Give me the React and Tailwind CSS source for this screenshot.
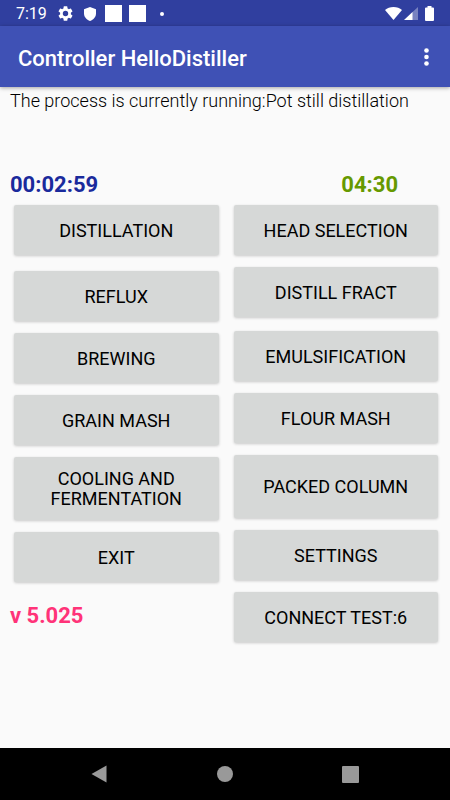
import React from "react";

const leftButtons = [
  { label: "Distillation", style: "h-[50px] mb-4" },
  { label: "Reflux", style: "h-[50px] mb-3" },
  { label: "Brewing", style: "h-[50px] mb-3" },
  { label: "Grain mash", style: "h-[50px] mb-3" },
  { label: "Cooling and fermentation", style: "h-[63px] mb-3" },
  { label: "Exit", style: "h-[50px]" },
];

const rightButtons = [
  { label: "Head selection", style: "h-[50px] mb-3" },
  { label: "Distill fract", style: "h-[50px] mb-3.5" },
  { label: "Emulsification", style: "h-[50px] mb-3" },
  { label: "Flour mash", style: "h-[50px] mb-3" },
  { label: "Packed column", style: "h-[63px] mb-3" },
  { label: "Settings", style: "h-[50px] mb-3" },
  { label: "Connect test:6", style: "h-[50px]" },
];

const MenuButton = ({ label, style }) => (
  <button
    className={`w-full shrink-0 px-6 pt-px rounded-xs bg-[#d6d8d7] text-lg leading-5 font-normal uppercase text-black shadow-[0_1px_3px_rgba(0,0,0,0.2)] ${style}`}
  >
    {label}
  </button>
);

const StatusBar = () => (
  <div className="h-[26px] flex items-center justify-between bg-[#303f9f] px-4 pt-px text-white">
    <div className="flex items-center">
      <span className="w-[42px] pt-px text-base leading-5">7:19</span>
      <svg className="w-[15px] h-[15px]" viewBox="2 2 20 20" fill="currentColor">
        <path d="M19.14 12.94c.04-.3.06-.61.06-.94s-.02-.64-.07-.94l2.03-1.58a.49.49 0 0 0 .12-.61l-1.92-3.32a.49.49 0 0 0-.59-.22l-2.39.96a7 7 0 0 0-1.62-.94l-.36-2.54a.48.48 0 0 0-.48-.41h-3.84a.48.48 0 0 0-.47.41l-.36 2.54c-.59.24-1.13.57-1.62.94l-2.39-.96a.48.48 0 0 0-.59.22L2.74 8.87a.47.47 0 0 0 .12.61l2.03 1.58a6.6 6.6 0 0 0 0 1.88l-2.03 1.58a.49.49 0 0 0-.12.61l1.92 3.32c.12.22.37.29.59.22l2.39-.96c.5.38 1.03.7 1.62.94l.36 2.54c.05.24.24.41.48.41h3.84c.24 0 .44-.17.47-.41l.36-2.54c.59-.24 1.13-.56 1.62-.94l2.39.96c.22.08.47 0 .59-.22l1.92-3.32a.47.47 0 0 0-.12-.61zM12 15.6a3.6 3.6 0 1 1 0-7.2 3.6 3.6 0 0 1 0 7.2z" />
      </svg>
      <svg className="w-3 h-[14px] ml-[11px]" viewBox="0 0 12 14" fill="currentColor">
        <path d="M6 0 12 2.3v4.3c0 3.3-2.5 6.4-6 7.4C2.5 13 0 9.9 0 6.6V2.3z" />
      </svg>
      <span className="w-[17px] h-[17px] ml-[9px] bg-white" />
      <span className="w-[17px] h-[17px] ml-[7px] bg-white" />
      <span className="w-1 h-1 ml-3.5 rounded-full bg-white" />
    </div>
    <div className="flex items-center">
      <svg className="w-[17px] h-[13px]" viewBox="0 0 17 13" fill="currentColor">
        <path d="M8.5 13 0 3C2.2 1.1 5.2 0 8.5 0s6.3 1.1 8.5 3z" />
      </svg>
      <svg className="w-[14px] h-[13px] ml-0.5" viewBox="0 0 14 13" fill="currentColor">
        <path d="M14 0v13H8V5.6z" opacity="0.35" />
        <path d="M8.5 5v8H0z" />
      </svg>
      <svg className="w-[9px] h-[15px] ml-[7px]" viewBox="0 0 9 15" fill="currentColor">
        <path d="M2.5 0h4v1.5H8a1 1 0 0 1 1 1V14a1 1 0 0 1-1 1H1a1 1 0 0 1-1-1V2.5a1 1 0 0 1 1-1h1.5z" />
      </svg>
    </div>
  </div>
);

const AppBar = () => (
  <header className="h-[61px] flex items-center justify-between bg-[#3f51b5] pl-[18px] pr-4 text-white shadow-[0_1px_4px_rgba(0,0,0,0.35)]">
    <h1 className="pt-1 text-[22px] leading-7 font-medium">Controller HelloDistiller</h1>
    <button aria-label="More options" className="w-4 h-10 flex items-center justify-center">
      <svg className="w-[5px] h-[18px]" viewBox="0 0 5 18" fill="currentColor">
        <circle cx="2.5" cy="2.5" r="2.3" />
        <circle cx="2.5" cy="9" r="2.3" />
        <circle cx="2.5" cy="15.5" r="2.3" />
      </svg>
    </button>
  </header>
);

const NavBar = () => (
  <nav className="h-[52px] flex items-center justify-between bg-black px-[91px] text-[#999999]">
    <button aria-label="Back">
      <svg className="w-4 h-[18px]" viewBox="0 0 16 18" fill="currentColor">
        <path d="M15.5.5v17L.5 9z" />
      </svg>
    </button>
    <button aria-label="Home">
      <span className="block w-4 h-4 rounded-full bg-[#999999]" />
    </button>
    <button aria-label="Recent apps">
      <span className="block w-[17px] h-[17px] rounded-[1px] bg-[#999999]" />
    </button>
  </nav>
);

const App = () => {
  return (
    <div className="min-h-screen flex flex-col bg-[#fafafa] font-['Roboto',sans-serif]">
      <StatusBar />
      <AppBar />

      <main className="flex-1 pt-0.5">
        <p className="px-2.5 text-lg leading-6 font-light text-black">
          The process is currently running:Pot still distillation
        </p>

        <div className="mt-[58px] pl-2.5 pr-[52px] flex justify-between text-[22px] leading-7 font-bold">
          <span className="text-[#1a2a9c]">00:02:59</span>
          <span className="text-[#669900]">04:30</span>
        </div>

        <div className="mt-1.5 pl-3.5 pr-3 grid grid-cols-2 gap-[15px]">
          <div className="flex flex-col">
            {leftButtons.map((item, index) => (
              <MenuButton key={index} label={item.label} style={item.style} />
            ))}
            <p className="mt-5 -ml-1 text-[22px] leading-7 font-bold text-[#ff3378]">v 5.025</p>
          </div>
          <div className="flex flex-col">
            {rightButtons.map((item, index) => (
              <MenuButton key={index} label={item.label} style={item.style} />
            ))}
          </div>
        </div>
      </main>

      <NavBar />
    </div>
  );
};

export default App;
